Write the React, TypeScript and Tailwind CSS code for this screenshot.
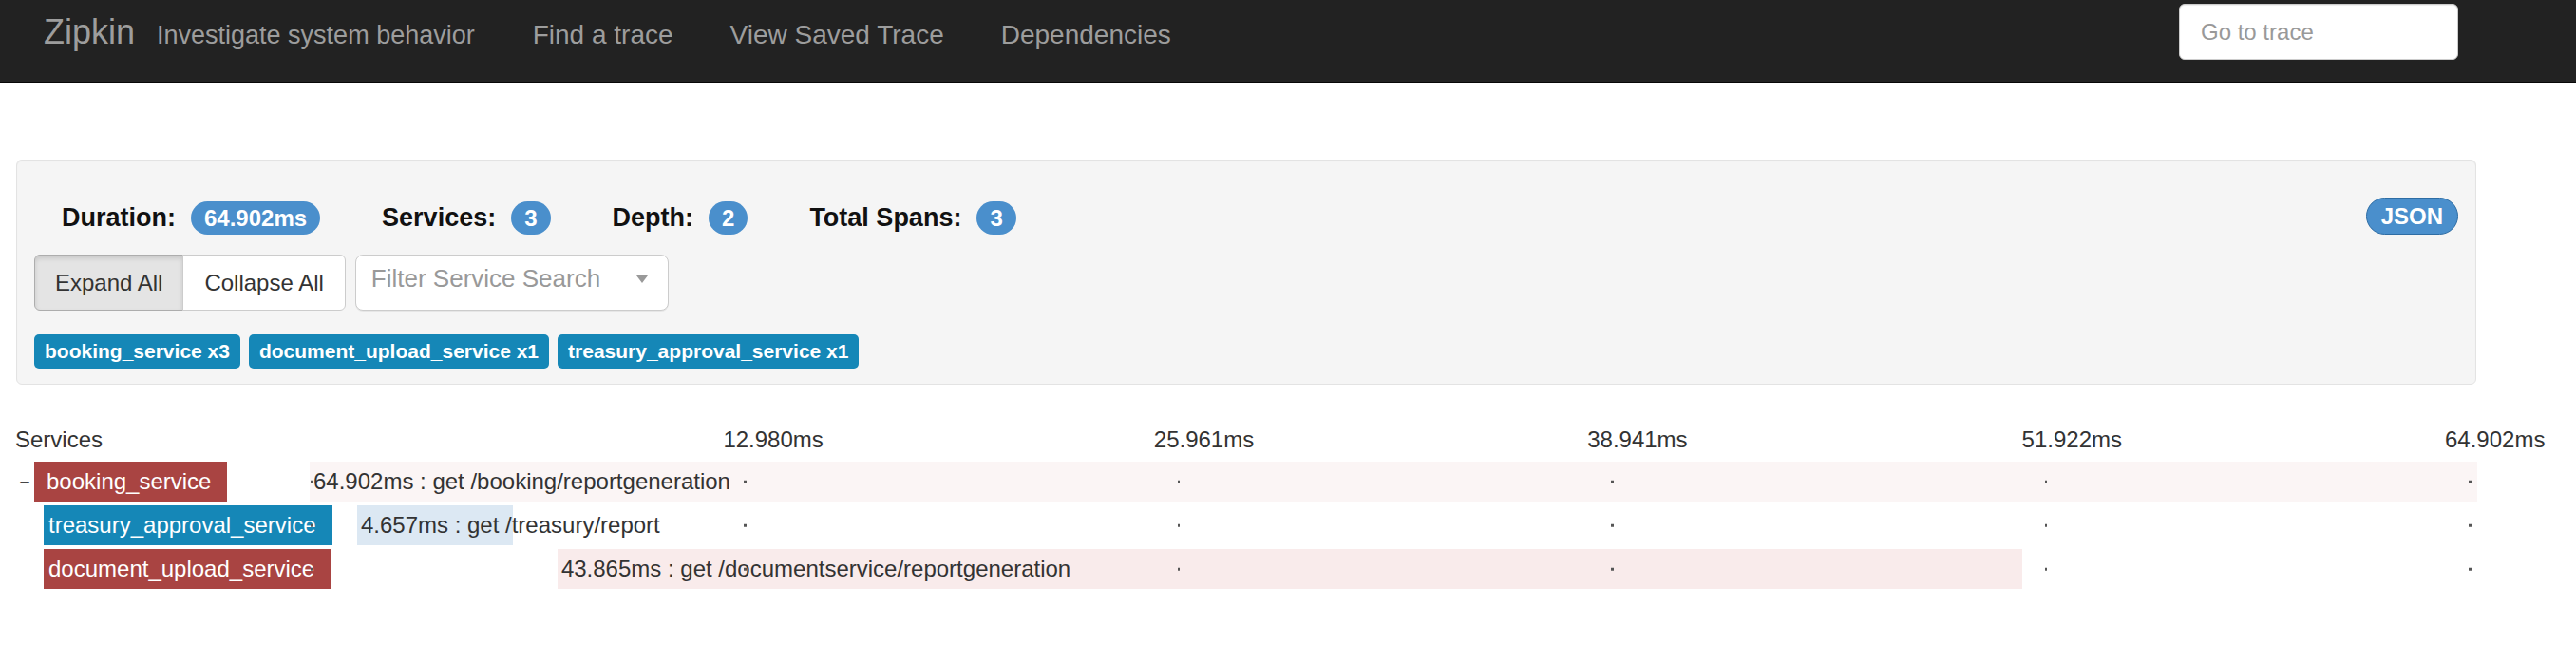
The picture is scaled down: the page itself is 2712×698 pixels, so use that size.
const NAV_LINKS = ["Find a trace", "View Saved Trace", "Dependencies"];

const SUMMARY = [
  { label: "Duration:", value: "64.902ms" },
  { label: "Services:", value: "3" },
  { label: "Depth:", value: "2" },
  { label: "Total Spans:", value: "3" },
];

const SERVICE_COUNTS = [
  "booking_service x3",
  "document_upload_service x1",
  "treasury_approval_service x1",
];

const TOTAL_MS = 64.902;

const SPANS = [
  {
    service: "booking_service",
    depth: 0,
    start: 0,
    duration: 64.902,
    name: "get /booking/reportgeneration",
    label: "bg-[#a94442]",
    bar: "bg-[#fbf5f5]",
  },
  {
    service: "treasury_approval_service",
    depth: 1,
    start: 1.42,
    duration: 4.657,
    name: "get /treasury/report",
    label: "bg-[#1587b7]",
    bar: "bg-[#dce8f3]",
  },
  {
    service: "document_upload_service",
    depth: 1,
    start: 7.42,
    duration: 43.865,
    name: "get /documentservice/reportgeneration",
    label: "bg-[#a94442]",
    bar: "bg-[#f9ebeb]",
  },
];

// header label nudges, px from each 20% mark
const HEADER_OFFSETS = [-21, -24, -24, -23, -34];

function NavBar() {
  return (
    <nav className="flex h-[87px] items-start justify-between border-b border-[#080808] bg-[#222] text-[#9d9d9d]">
      <div className="flex items-baseline pl-[46px] pt-[16px]">
        <a className="text-[36px] leading-none">Zipkin</a>
        <span className="ml-[23px] text-[27px] leading-none">Investigate system behavior</span>
        <ul className="ml-[31px] flex items-baseline">
          {NAV_LINKS.map((link) => (
            <li key={link}>
              <a className="px-[30px] text-[28px] leading-none">{link}</a>
            </li>
          ))}
        </ul>
      </div>
      <input
        placeholder="Go to trace"
        className="mt-[4px] mr-[124px] h-[59px] w-[294px] rounded-[6px] border border-[#ccc] bg-white pl-[22px] text-[24px] text-[#555] shadow-[inset_0_1px_1px_rgba(0,0,0,0.075)] outline-none placeholder:text-[#999]"
      />
    </nav>
  );
}

function TraceSummary() {
  return (
    <section className="mt-[81px] ml-[1px] w-[2590px] rounded-[6px] border border-[#e3e3e3] bg-[#f5f5f5] px-[18px] pt-[39px] pb-[16px] shadow-[inset_0_1px_1px_rgba(0,0,0,0.05)]">
      <div className="flex items-end justify-between">
        <ul className="ml-[29px] flex items-center gap-[65px]">
          {SUMMARY.map((item) => (
            <li key={item.label} className="flex items-center gap-[16px]">
              <strong className="text-[27px] leading-[35px] font-bold text-[#111]">{item.label}</strong>
              <span className="flex h-[35px] items-center rounded-full bg-[#4a8fcc] px-[14px] text-[24px] font-bold text-white">
                {item.value}
              </span>
            </li>
          ))}
        </ul>
        <button
          type="button"
          className="h-[39px] rounded-full border-[1.5px] border-[#2e6da4] bg-[#4a8fcc] px-[15px] text-[24px] leading-none font-bold text-white"
        >
          JSON
        </button>
      </div>

      <div className="mt-[21px] flex h-[59px] gap-[10px]">
        <div className="flex">
          <button
            type="button"
            className="rounded-l-[6px] border border-[#adadad] bg-[#e4e4e4] px-[21px] text-[24px] text-[#333] shadow-[inset_0_3px_5px_rgba(0,0,0,0.125)]"
          >
            Expand All
          </button>
          <button
            type="button"
            className="-ml-px rounded-r-[6px] border border-[#ccc] bg-white px-[22px] text-[24px] text-[#333]"
          >
            Collapse All
          </button>
        </div>
        <div className="flex w-[330px] items-center justify-between rounded-[8px] border border-[#ccc] bg-white pr-[21px] pb-[8px] pl-[16px] shadow-[0_1px_0_rgba(0,0,0,0.06)]">
          <span className="text-[26px] text-[#999]">Filter Service Search</span>
          <svg width="12" height="8" viewBox="0 0 12 8" aria-hidden>
            <path d="M0 0h12L6 8z" fill="#999" />
          </svg>
        </div>
      </div>

      <div className="mt-[25px] flex gap-[9px]">
        {SERVICE_COUNTS.map((s) => (
          <span
            key={s}
            className="flex h-[36px] items-center rounded-[5px] bg-[#1587b7] px-[11px] text-[21px] font-bold text-white"
          >
            {s}
          </span>
        ))}
      </div>
    </section>
  );
}

function TraceTimeline() {
  return (
    <section className="mt-[41px]">
      <div className="flex h-[34px]">
        <div className="w-[310px] shrink-0 text-[24px] leading-[34px]">Services</div>
        <div className="relative h-full w-[2282px] shrink-0">
          {HEADER_OFFSETS.map((off, i) => (
            <span
              key={i}
              className="absolute top-0 text-[24px] leading-[34px] whitespace-nowrap"
              style={{ left: `calc(${(i + 1) * 20}% + ${off}px)` }}
            >
              {((TOTAL_MS * (i + 1)) / 5).toFixed(3)}ms
            </span>
          ))}
        </div>
      </div>

      <div className="mt-[6px] flex flex-col gap-[4px]">
        {SPANS.map((span) => (
          <div key={span.service} className="flex h-[42px]">
            <div className="flex w-[310px] shrink-0">
              {span.depth === 0 ? (
                <span className="flex w-[20px] items-center justify-center text-[19px] font-bold text-[#111]">–</span>
              ) : (
                <span className="w-[30px] shrink-0" />
              )}
              <div
                className={`flex h-full shrink-0 items-center text-[24px] whitespace-nowrap text-white ${span.label} ${
                  span.depth === 0 ? "pr-[17px] pl-[13px]" : "pr-[18px] pl-[5px]"
                }`}
              >
                {span.service}
              </div>
            </div>
            <div className="relative h-full w-[2282px] shrink-0">
              <div
                className={`absolute inset-y-0 flex items-center pl-[4px] text-[24px] whitespace-nowrap text-[#333] ${span.bar}`}
                style={{
                  left: `${(span.start / TOTAL_MS) * 100}%`,
                  width: `${(span.duration / TOTAL_MS) * 100}%`,
                }}
              >
                {span.duration.toFixed(3)}ms : {span.name}
              </div>
              {[0, 1, 2, 3, 4, 5].map((i) => (
                <span
                  key={i}
                  className="absolute top-1/2 h-[2.5px] w-[2.5px] -translate-y-1/2 bg-[#555]"
                  style={{ left: i === 5 ? "calc(100% - 9px)" : `calc(${i * 20}% + 1px)` }}
                />
              ))}
            </div>
          </div>
        ))}
      </div>
    </section>
  );
}

export default function App() {
  return (
    <div className="min-h-[698px] bg-white font-['Liberation_Sans',Arial,sans-serif] text-[#333]">
      <NavBar />
      <main className="pl-[16px]">
        <TraceSummary />
        <TraceTimeline />
      </main>
    </div>
  );
}
